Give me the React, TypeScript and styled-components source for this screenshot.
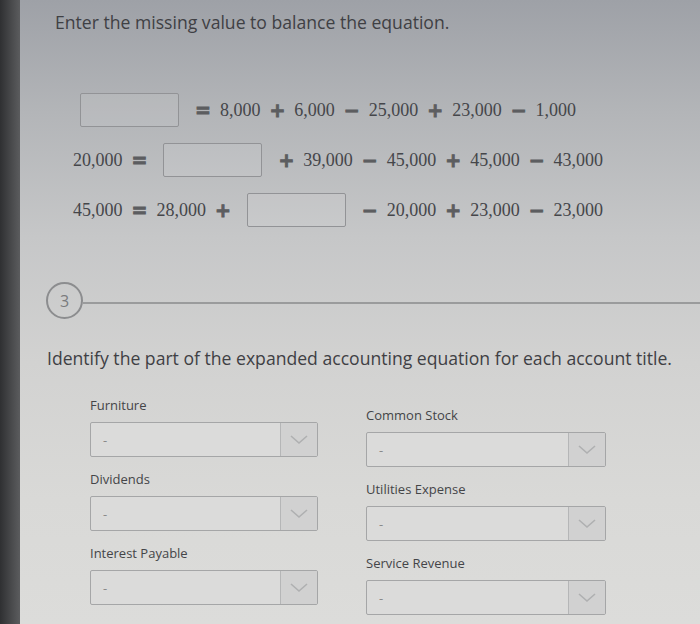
import React from "react";
import styled, { createGlobalStyle } from "styled-components";

const GlobalStyle = createGlobalStyle`
  html, body {
    margin: 0;
    padding: 0;
    overflow: hidden;
  }
`;

const Page = styled.div`
  display: flex;
  width: 700px;
  height: 624px;
  overflow: hidden;
`;

const Bezel = styled.div`
  flex: 0 0 20px;
  background: linear-gradient(90deg, #2f3032 0%, #4a4b4d 60%, #5b5c5e 100%);
`;

const Screen = styled.div`
  flex: 1;
  display: flex;
  flex-direction: column;
  background: linear-gradient(
    180deg,
    #9ea1a7 0%,
    #b3b5b8 18%,
    #c6c7c8 38%,
    #d2d2d1 58%,
    #d9d9d7 80%,
    #dcdcda 100%
  );
  font-family: "Open Sans", "Liberation Sans", sans-serif;
  color: #3f4044;
`;

const Title = styled.h1`
  margin: 10px 0 0 35px;
  font-size: 17.6px;
  font-weight: 400;
  line-height: 24px;
`;

const Equations = styled.div`
  display: flex;
  flex-direction: column;
  gap: 16px;
  margin-top: 59px;
`;

const Row = styled.div<{ $indent: number }>`
  display: flex;
  align-items: center;
  gap: 6px;
  height: 34px;
  padding-left: ${({ $indent }) => $indent}px;
  font-family: "Liberation Serif", "Times New Roman", serif;
  font-size: 18px;
  color: #45464a;
`;

const Num = styled.span``;

const Op = styled.span`
  font-family: "DejaVu Sans", sans-serif;
  font-weight: 700;
  font-size: 19px;
  color: #5c5d60;
  -webkit-text-stroke: 0.9px #5c5d60;
  margin: 0 3px;
`;

const Blank = styled.div`
  width: 97px;
  height: 32px;
  border: 1.5px solid #929396;
  border-radius: 2px;
  background: rgba(255, 255, 255, 0.08);
  margin: 0 7px;
`;

const SectionHead = styled.div`
  display: flex;
  align-items: center;
  margin: 55px 0 0 26px;
`;

const StepCircle = styled.div`
  flex: 0 0 auto;
  width: 33px;
  height: 33px;
  border: 2px solid #8c8d8f;
  border-radius: 50%;
  display: flex;
  align-items: center;
  justify-content: center;
  font-size: 16px;
  color: #7a7b7d;
`;

const Rule = styled.div`
  flex: 1;
  height: 2px;
  background: #9a9b9c;
  margin-top: 4px;
`;

const Prompt = styled.p`
  margin: 27px 0 0 27px;
  font-size: 17.6px;
  line-height: 24px;
`;

const Fields = styled.div`
  display: grid;
  grid-template-columns: 228px 240px;
  column-gap: 48px;
  margin: 26px 0 0 70px;
`;

const Column = styled.div<{ $shift: number }>`
  display: flex;
  flex-direction: column;
  gap: 13px;
  padding-top: ${({ $shift }) => $shift}px;
`;

const Field = styled.div`
  display: flex;
  flex-direction: column;
  gap: 8px;
`;

const Label = styled.label`
  font-size: 13px;
  line-height: 18px;
  color: #444548;
`;

const Select = styled.div`
  display: flex;
  height: 33px;
  border: 1px solid #a5a6a7;
  border-radius: 2px;
  background: #dbdbda;
  overflow: hidden;
`;

const Value = styled.div`
  flex: 1;
  display: flex;
  align-items: center;
  padding-left: 12px;
  font-size: 13px;
  color: #8a8a8a;
`;

const Arrow = styled.div`
  flex: 0 0 36px;
  display: flex;
  align-items: center;
  justify-content: center;
  border-left: 1px solid #b5b6b7;
  background: #d1d1d1;
`;

const Chevron = () => (
  <svg width="18" height="10" viewBox="0 0 18 10">
    <path d="M1 1 L9 8 L17 1" fill="none" stroke="#afb0b1" strokeWidth="1.6" />
  </svg>
);

const Dropdown = ({ label }: { label: string }) => (
  <Field>
    <Label>{label}</Label>
    <Select>
      <Value>-</Value>
      <Arrow>
        <Chevron />
      </Arrow>
    </Select>
  </Field>
);

const App = () => {
  return (
    <>
      <GlobalStyle />
      <Page>
        <Bezel />
        <Screen>
          <Title>Enter the missing value to balance the equation.</Title>

          <Equations>
            <Row $indent={53}>
              <Blank />
              <Op>=</Op>
              <Num>8,000</Num>
              <Op>+</Op>
              <Num>6,000</Num>
              <Op>−</Op>
              <Num>25,000</Num>
              <Op>+</Op>
              <Num>23,000</Num>
              <Op>−</Op>
              <Num>1,000</Num>
            </Row>
            <Row $indent={53}>
              <Num>20,000</Num>
              <Op>=</Op>
              <Blank />
              <Op>+</Op>
              <Num>39,000</Num>
              <Op>−</Op>
              <Num>45,000</Num>
              <Op>+</Op>
              <Num>45,000</Num>
              <Op>−</Op>
              <Num>43,000</Num>
            </Row>
            <Row $indent={53}>
              <Num>45,000</Num>
              <Op>=</Op>
              <Num>28,000</Num>
              <Op>+</Op>
              <Blank />
              <Op>−</Op>
              <Num>20,000</Num>
              <Op>+</Op>
              <Num>23,000</Num>
              <Op>−</Op>
              <Num>23,000</Num>
            </Row>
          </Equations>

          <SectionHead>
            <StepCircle>3</StepCircle>
            <Rule />
          </SectionHead>

          <Prompt>
            Identify the part of the expanded accounting equation for each account title.
          </Prompt>

          <Fields>
            <Column $shift={0}>
              <Dropdown label="Furniture" />
              <Dropdown label="Dividends" />
              <Dropdown label="Interest Payable" />
            </Column>
            <Column $shift={10}>
              <Dropdown label="Common Stock" />
              <Dropdown label="Utilities Expense" />
              <Dropdown label="Service Revenue" />
            </Column>
          </Fields>
        </Screen>
      </Page>
    </>
  );
};

export default App;
